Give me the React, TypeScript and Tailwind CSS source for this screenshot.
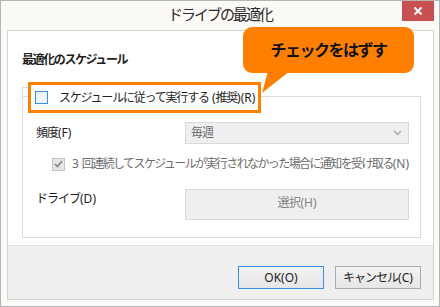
import React from "react";

function L({ children }: { children: React.ReactNode }) {
  return <span className="tracking-normal">{children}</span>;
}

export default function App() {
  return (
    <div className="relative w-[440px] h-[307px] bg-[#fbfaf7] border border-[#b5b5b5] font-['Noto_Sans','Noto_Sans_CJK_JP',sans-serif] text-[#1e1e1e] overflow-hidden">
      {/* Title bar */}
      <div className="relative h-[29px] flex items-center justify-center">
        <span className="text-[15px] tracking-[-2px] text-[#2b2b2b] leading-none pb-[2px]">ドライブの最適化</span>
        <div className="absolute top-[-1px] right-[5px] w-[32px] h-[21px] bg-[#c75050] flex items-center justify-center">
          <svg width="10" height="10" viewBox="0 0 10 10">
            <path d="M1.5 1.5 L8.5 8.5 M8.5 1.5 L1.5 8.5" stroke="#ffffff" strokeWidth="2" />
          </svg>
        </div>
      </div>

      {/* Inner panel */}
      <div className="ml-[6px] mr-[5px] h-[270px] border border-[#d4d4d4] flex flex-col">
        <div className="h-[214px] bg-white pl-[14px] pr-[12px] pt-[21px] flex flex-col">
          <div className="text-[12px] leading-[16px] font-bold tracking-[-1.4px]">最適化のスケジュール</div>

          {/* Group box */}
          <div className="relative mt-[28px] h-[142px] border border-[#dcdcdc] pl-[13px] pt-[25px] pr-[11px]">
            {/* highlight annotation with group label */}
            <div className="absolute left-[5px] top-[-15px] w-[233px] h-[31px] border-[3px] border-[#ff8000] bg-white flex items-center pl-[4px]">
              <div className="w-[13px] h-[13px] border-[1.5px] border-[#3a8ee6] bg-[#eef5fd]" />
              <span className="ml-[11px] text-[12px] tracking-[-1.2px] whitespace-nowrap">
                スケジュールに従って実行する<L> (</L>推奨<L>)(R)</L>
              </span>
            </div>
            <div className="absolute left-[-1px] top-[-10px] w-[6px] h-[10px] border-l border-t border-[#dcdcdc]" />

            {/* Frequency row */}
            <div className="flex items-center h-[22px]">
              <span className="w-[149px] text-[12px] tracking-[-1px]">頻度<L>(F)</L></span>
              <div className="flex-1 h-[22px] bg-[#efefef] border border-[#d9d9d9] flex items-center justify-between pl-[5px] pr-[6px]">
                <span className="text-[12px] tracking-[-1px] text-[#6d6d6d]">毎週</span>
                <svg width="9" height="6" viewBox="0 0 9 6">
                  <path d="M1 1 L4.5 4.5 L8 1" stroke="#a8a8a8" strokeWidth="1.3" fill="none" />
                </svg>
              </div>
            </div>

            {/* Notify row */}
            <div className="flex items-center mt-[12px] h-[16px] pl-[16px]">
              <div className="w-[13px] h-[13px] border border-[#c4c4c4] bg-[#e6e6e6] flex items-center justify-center">
                <svg width="9" height="8" viewBox="0 0 9 8">
                  <path d="M1 4 L3.5 6.5 L8 1.2" stroke="#8a8a8a" strokeWidth="1.8" fill="none" />
                </svg>
              </div>
              <span className="ml-[7px] text-[12px] tracking-[-1.6px] text-[#6d6d6d] whitespace-nowrap">
                <L>3 </L>回連続してスケジュールが実行されなかった場合に通知を受け取る<L>(N)</L>
              </span>
            </div>

            {/* Drive row */}
            <div className="flex items-center mt-[17px]">
              <span className="w-[149px] text-[12px] tracking-[-1px] self-start pt-[1px]">ドライブ<L>(D)</L></span>
              <div className="flex-1 h-[31px] bg-[#efefef] border border-[#d9d9d9] flex items-start justify-center pt-[4px]">
                <span className="text-[12px] tracking-[-0.5px] text-[#838383]">選択<L>(H)</L></span>
              </div>
            </div>
          </div>
        </div>

        {/* Footer */}
        <div className="flex-1 bg-[#efefef] border-t border-[#e2e2e2] flex justify-end items-start pt-[20px] pr-[12px] gap-[11px]">
          <div className="w-[86px] h-[23px] border border-[#3c8ee0] bg-gradient-to-b from-[#f3f3f3] to-[#e6e6e6] flex items-center justify-center">
            <span className="text-[12px]">OK(O)</span>
          </div>
          <div className="w-[86px] h-[23px] border border-[#acacac] bg-gradient-to-b from-[#f3f3f3] to-[#e6e6e6] flex items-center justify-center">
            <span className="text-[12px] tracking-[-1px]">キャンセル<L>(C)</L></span>
          </div>
        </div>
      </div>

      {/* Callout annotation */}
      <div className="absolute left-[242px] top-[26px] w-[171px] h-[46px] rounded-[9px] bg-[#ff8000] flex items-center justify-center">
        <span className="text-[16px] font-bold tracking-[-1.5px] text-[#111]">チェックをはずす</span>
      </div>
      <svg className="absolute left-[258px] top-[70px]" width="34" height="24" viewBox="0 0 34 24">
        <polygon points="9,0 31,0 3,22" fill="#ff8000" />
      </svg>
    </div>
  );
}
